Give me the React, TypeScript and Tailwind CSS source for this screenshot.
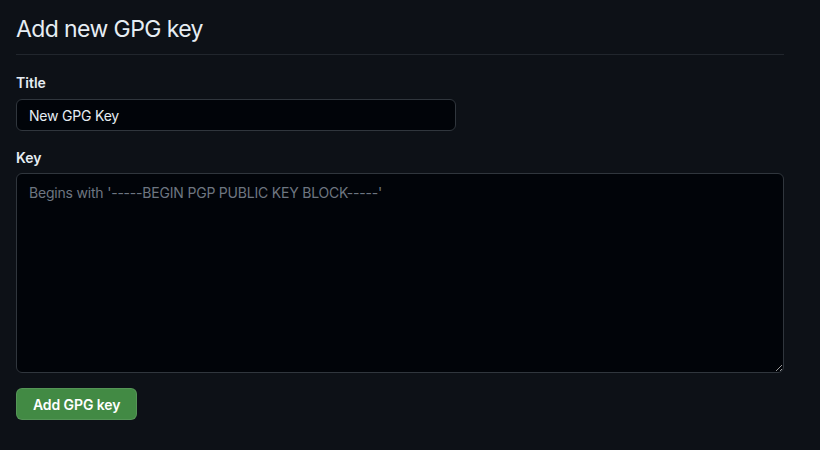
export default function App() {
  return (
    <div
      className="min-h-[450px] w-full bg-[#0d1117] px-4 text-[#e6edf3]"
      style={{ fontFamily: 'Inter, "Liberation Sans", sans-serif' }}
    >
      <div className="w-[768px]">
        <div className="border-b border-[#21262d] pb-[10px] pt-[14px]">
          <h2 className="text-[23px] font-normal leading-[30px] tracking-[-0.6px]">Add new GPG key</h2>
        </div>

        <form className="pt-[17px]">
          <label htmlFor="title" className="mb-[6px] block text-[14px] font-semibold leading-[21px]">
            Title
          </label>
          <input
            id="title"
            type="text"
            defaultValue="New GPG Key"
            className="block h-[32px] w-[440px] rounded-md border border-[#30363d] bg-[#010409] px-3 text-[14px] tracking-[-0.2px] text-[#e6edf3] outline-none"
          />

          <label htmlFor="key" className="mb-[5px] mt-[16px] block text-[14px] font-semibold leading-[21px]">
            Key
          </label>
          <textarea
            id="key"
            placeholder="Begins with '-----BEGIN PGP PUBLIC KEY BLOCK-----'"
            className="block h-[200px] w-[768px] resize-y rounded-md border border-[#30363d] bg-[#010409] px-3 pt-2 text-[14px] leading-[21px] tracking-[-0.2px] text-[#e6edf3] outline-none placeholder:text-[#6e7681]"
          />

          <button
            type="button"
            className="mt-[15px] h-[32px] rounded-md border border-[#ffffff1a] bg-[#428a44] px-4 text-[14px] font-semibold tracking-[-0.1px] text-white"
          >
            Add GPG key
          </button>
        </form>
      </div>
    </div>
  );
}
